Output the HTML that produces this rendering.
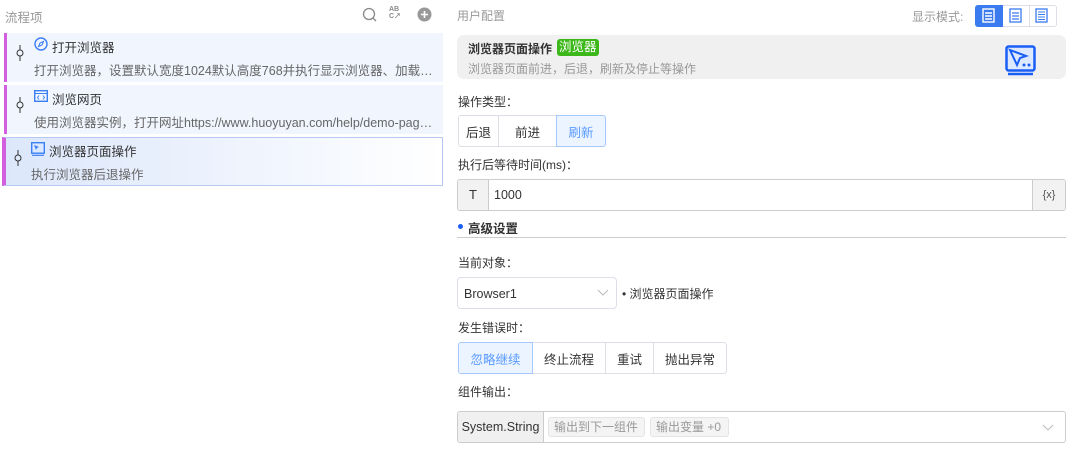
<!DOCTYPE html>
<html><head><meta charset="utf-8"><style>
*{box-sizing:border-box;margin:0;padding:0}
body{width:1080px;height:475px;background:#fff;font-family:"Liberation Sans","Noto Sans CJK SC",sans-serif;position:relative;overflow:hidden;color:#333}
.a{position:absolute;white-space:nowrap}
.lab{font-size:12px;color:#333}
.item{position:absolute;left:4px;width:439px;height:49px;background:#f0f5fe;border-left:3px solid #d35fe0}
.item .t{position:absolute;left:45px;top:4px;font-size:12.5px;color:#333;white-space:nowrap}
.item .d{position:absolute;left:27px;top:27px;font-size:12.5px;color:#666;width:400px;overflow:hidden;text-overflow:ellipsis;white-space:nowrap}
.pin{position:absolute;left:9px;top:12px;width:8px;height:16px}
.btn{position:absolute;height:32px;border:1px solid #dcdfe6;font-size:12.5px;display:flex;align-items:center;justify-content:center;color:#333;background:#fff}
.on{background:#ecf4ff;border-color:#a6c8ff;color:#5a9bff;z-index:2}
.tag{position:absolute;top:417px;height:20px;background:#f4f4f5;border:1px solid #e4e4e7;border-radius:3px;font-size:12px;color:#999;padding:0 5px;line-height:18px}
</style></head><body>
<div class="a" style="left:5px;top:7px;font-size:12.5px;color:#999">流程项</div>
<svg class="a" style="left:362px;top:7px" width="16" height="16"><circle cx="7" cy="7" r="5.5" fill="none" stroke="#888" stroke-width="1.3"/><path d="M11 11l3 3" stroke="#888" stroke-width="1.3"/></svg>
<div class="a" style="left:389px;top:6px;font-size:7px;font-weight:bold;color:#888;line-height:7px">AB<br>C↗</div>
<svg class="a" style="left:417px;top:7px" width="15" height="15"><circle cx="7.5" cy="7.5" r="7" fill="#999"/><path d="M7.5 4v7M4 7.5h7" stroke="#fff" stroke-width="1.6"/></svg>

<div class="item" style="top:33px"><svg class="pin" viewBox="0 0 8 16"><path d="M4 0v5M4 11v5" stroke="#333"/><circle cx="4" cy="8" r="3" fill="none" stroke="#333"/></svg>
<svg class="a" style="left:27px;top:4px" width="14" height="14"><circle cx="7" cy="7" r="6" fill="none" stroke="#3b7ff5" stroke-width="1.4"/><path d="M9.5 4.5L8 8 4.5 9.5 6 6z" fill="none" stroke="#3b7ff5"/></svg>
<div class="t">打开浏览器</div><div class="d">打开浏览器，设置默认宽度1024默认高度768并执行显示浏览器、加载图片等操作</div></div>
<div class="item" style="top:85px"><svg class="pin" viewBox="0 0 8 16"><path d="M4 0v5M4 11v5" stroke="#333"/><circle cx="4" cy="8" r="3" fill="none" stroke="#333"/></svg>
<svg class="a" style="left:27px;top:5px" width="14" height="12"><rect x=".7" y=".7" width="12.6" height="10.6" fill="none" stroke="#3b7ff5" stroke-width="1.4"/><path d="M1 3.5h12" stroke="#3b7ff5"/><path d="M5 5.5l-1.5 2 1.5 2M9 5.5l1.5 2-1.5 2" fill="none" stroke="#3b7ff5" stroke-width=".9"/></svg>
<div class="t">浏览网页</div><div class="d">使用浏览器实例，打开网址https://www.huoyuyan.com/help/demo-pages/index.html</div></div>
<div class="item" style="top:137px;left:2px;width:441px;border:1px solid #b5c9f3;border-left:4px solid #d35fe0;background:linear-gradient(90deg,#dce7fb,#fff)"><svg class="pin" style="left:8px" viewBox="0 0 8 16"><path d="M4 0v5M4 11v5" stroke="#333"/><circle cx="4" cy="8" r="3" fill="none" stroke="#333"/></svg>
<svg class="a" style="left:25px;top:4px" width="14" height="14"><rect x=".7" y=".7" width="12.6" height="10.5" fill="#dbe8ff" stroke="#3b7ff5" stroke-width="1.4"/><path d="M1 13.3h12" stroke="#3b7ff5" stroke-width="1.2"/><path d="M3 3l5 2-2 1-1 2z" fill="#3b7ff5"/></svg>
<div class="t" style="left:43px;top:3px">浏览器页面操作</div><div class="d" style="left:25px;top:26px">执行浏览器后退操作</div></div>

<div class="a" style="left:457px;top:7px;font-size:12px;color:#999">用户配置</div>
<div class="a" style="left:912px;top:8px;font-size:12px;color:#999">显示模式:</div>
<div class="a" style="left:975px;top:5px;width:82px;height:22px;border:1px solid #dcdfe6;border-radius:3px"></div>
<div class="a" style="left:975px;top:5px;width:28px;height:22px;background:#3a7bf0;border-radius:3px 0 0 3px"></div>
<div class="a" style="left:1029px;top:6px;width:1px;height:20px;background:#dcdfe6"></div>
<svg class="a" style="left:982px;top:8px" width="14" height="15"><rect x="1" y="1" width="11" height="13" fill="none" stroke="#fff" stroke-width="1.4"/><path d="M3 5h7M3 8h7M3 11h7" stroke="#fff" stroke-width="1.5"/></svg>
<svg class="a" style="left:1009px;top:8px" width="14" height="15"><rect x="1" y="1" width="11" height="13" fill="none" stroke="#3a7bf0" stroke-width="1.3"/><path d="M3 5h7M3 8h7M3 11h7" stroke="#3a7bf0" stroke-width="1.3"/></svg>
<svg class="a" style="left:1035px;top:8px" width="14" height="15"><rect x="1" y="1" width="11" height="13" fill="none" stroke="#3a7bf0" stroke-width="1.3"/><path d="M3 4h7M3 6.5h7M3 9h7M3 11.5h7" stroke="#3a7bf0" stroke-width="1"/></svg>

<div class="a" style="left:457px;top:35px;width:609px;height:44px;background:#f0f0f0;border-radius:7px"></div>
<div class="a" style="left:468px;top:40px;font-size:12px;font-weight:bold;color:#333">浏览器页面操作</div>
<div class="a" style="left:557px;top:39px;height:17px;padding:0 2px;background:#3cb81a;color:#fff;font-size:12.5px;border-radius:3px;line-height:17px">浏览器</div>
<div class="a" style="left:468px;top:60px;font-size:12px;color:#999">浏览器页面前进，后退，刷新及停止等操作</div>
<svg class="a" style="left:1005px;top:45px" width="32" height="31"><rect x="1.5" y="1.5" width="28" height="24" rx="2" fill="#dde9ff" stroke="#1a5ff5" stroke-width="2.5"/><path d="M3 29h25" stroke="#1a5ff5" stroke-width="2.5"/><path d="M5 5l16 6-6 2-3 7z" fill="none" stroke="#1a5ff5" stroke-width="2"/><circle cx="19" cy="20" r="1.5" fill="#1a5ff5"/><circle cx="24" cy="20" r="1.5" fill="#1a5ff5"/></svg>

<div class="a lab" style="left:458px;top:93px">操作类型：</div>
<div class="btn" style="left:458px;top:115px;width:41px;border-radius:3px 0 0 3px">后退</div>
<div class="btn" style="left:498px;top:115px;width:59px">前进</div>
<div class="btn on" style="left:556px;top:115px;width:50px;border-radius:0 3px 3px 0">刷新</div>

<div class="a lab" style="left:458px;top:156px">执行后等待时间(ms)：</div>
<div class="a" style="left:457px;top:179px;width:609px;height:32px;border:1px solid #ccc;border-radius:3px;overflow:hidden">
<div class="a" style="left:0;top:0;width:31px;height:30px;background:#f2f2f2;border-right:1px solid #ccc;font-size:13px;text-align:center;line-height:30px">T</div>
<div class="a" style="left:36px;top:8px;font-size:12.5px">1000</div>
<div class="a" style="right:0;top:0;width:33px;height:30px;background:#f2f2f2;border-left:1px solid #ccc;font-size:11px;text-align:center;line-height:30px;color:#555">{x}</div></div>

<div class="a" style="left:458px;top:224px;width:5px;height:5px;border-radius:50%;background:#1a5ff5"></div>
<div class="a" style="left:468px;top:218px;font-size:12.5px;font-weight:bold">高级设置</div>
<div class="a" style="left:457px;top:237px;width:609px;height:1px;background:#ccc"></div>

<div class="a lab" style="left:458px;top:254px">当前对象：</div>
<div class="a" style="left:457px;top:277px;width:160px;height:32px;border:1px solid #dcdfe6;border-radius:4px"></div>
<div class="a" style="left:464px;top:287px;font-size:12.5px">Browser1</div>
<svg class="a" style="left:597px;top:289px" width="12" height="8"><path d="M1 1l5 5 5-5" fill="none" stroke="#bbb"/></svg>
<div class="a" style="left:622px;top:285px;font-size:12px">• 浏览器页面操作</div>

<div class="a lab" style="left:458px;top:319px">发生错误时：</div>
<div class="btn on" style="left:458px;top:342px;width:75px;border-radius:3px 0 0 3px">忽略继续</div>
<div class="btn" style="left:532px;top:342px;width:74px">终止流程</div>
<div class="btn" style="left:605px;top:342px;width:49px">重试</div>
<div class="btn" style="left:653px;top:342px;width:74px;border-radius:0 3px 3px 0">抛出异常</div>

<div class="a lab" style="left:458px;top:383px">组件输出：</div>
<div class="a" style="left:457px;top:411px;width:609px;height:32px;border:1px solid #ccc;border-radius:3px;overflow:hidden">
<div class="a" style="left:0;top:0;width:86px;height:30px;background:#f0f0f0;border-right:1px solid #ccc;font-size:12.5px;line-height:30px;text-align:center">System.String</div></div>
<div class="tag" style="left:548px;width:97px">输出到下一组件</div>
<div class="tag" style="left:650px;width:79px">输出变量 +0</div>
<svg class="a" style="left:1042px;top:424px" width="12" height="8"><path d="M1 1l5 5 5-5" fill="none" stroke="#bbb"/></svg>
</body></html>
